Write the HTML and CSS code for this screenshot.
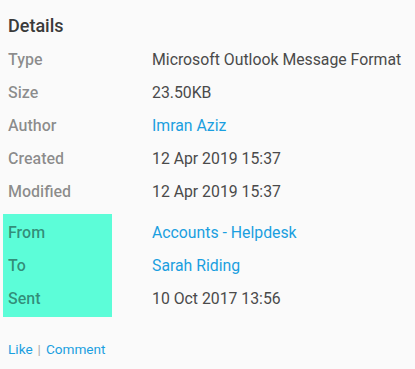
FILE: index.html
```html
<!DOCTYPE html>
<html lang="en">
<head>
  <meta charset="UTF-8" />
  <title>Details</title>
  <link rel="stylesheet" href="styles.css">
</head>
<body>
  <div class="panel">
    <h2 class="title">Details</h2>

    <div class="row"><span class="label">Type</span><span class="value">Microsoft Outlook Message Format</span></div>
    <div class="row"><span class="label">Size</span><span class="value">23.50KB</span></div>
    <div class="row"><span class="label">Author</span><a class="value link" href="#">Imran Aziz</a></div>
    <div class="row"><span class="label">Created</span><span class="value">12 Apr 2019 15:37</span></div>
    <div class="row"><span class="label">Modified</span><span class="value">12 Apr 2019 15:37</span></div>

    <div class="mail">
      <div class="mail-labels">
        <div class="label">From</div>
        <div class="label">To</div>
        <div class="label">Sent</div>
      </div>
      <div class="mail-values">
        <a class="value link" href="#">Accounts - Helpdesk</a>
        <a class="value link" href="#">Sarah Riding</a>
        <div class="value">10 Oct 2017 13:56</div>
      </div>
    </div>

    <div class="actions">
      <a href="#">Like</a><span class="sep">|</span><a href="#">Comment</a>
    </div>
  </div>
</body>
</html>
```

FILE: styles.css
```css
body {
  margin: 0;
  background-color: #fafafa;
  font-family: Roboto, "Noto Sans", sans-serif;
  color: #444;
}
.panel {
  padding: 15px 8px 8px;
}
.title {
  margin: 0 0 6px;
  font-size: 18px;
  font-weight: 500;
  color: #3a3a3a;
  line-height: 22px;
}
.row {
  display: grid;
  grid-template-columns: 144px 1fr;
  height: 33px;
  align-items: center;
}
.label {
  font-size: 16px;
  font-weight: 500;
  color: rgba(0,0,0,0.45);
}
.value {
  font-size: 15.8px;
  color: #4a4a4a;
  text-decoration: none;
}
.link {
  color: #1a9fe0;
}
.mail {
  display: flex;
  margin: 6px 0 0 -5px;
}
.mail-labels {
  width: 104px;
  padding: 2px 0 2px 5px;
  background-color: #5cfdd8;
}
.mail-labels .label,
.mail-values .value {
  display: flex;
  align-items: center;
  height: 33px;
}
.mail-values {
  padding: 2px 0 2px 40px;
}
.actions {
  margin-top: 24px;
  font-size: 13.6px;
}
.actions a {
  color: #1a9fe0;
  text-decoration: none;
}
.sep {
  color: #aaa;
  margin: 0 5px;
}
```
